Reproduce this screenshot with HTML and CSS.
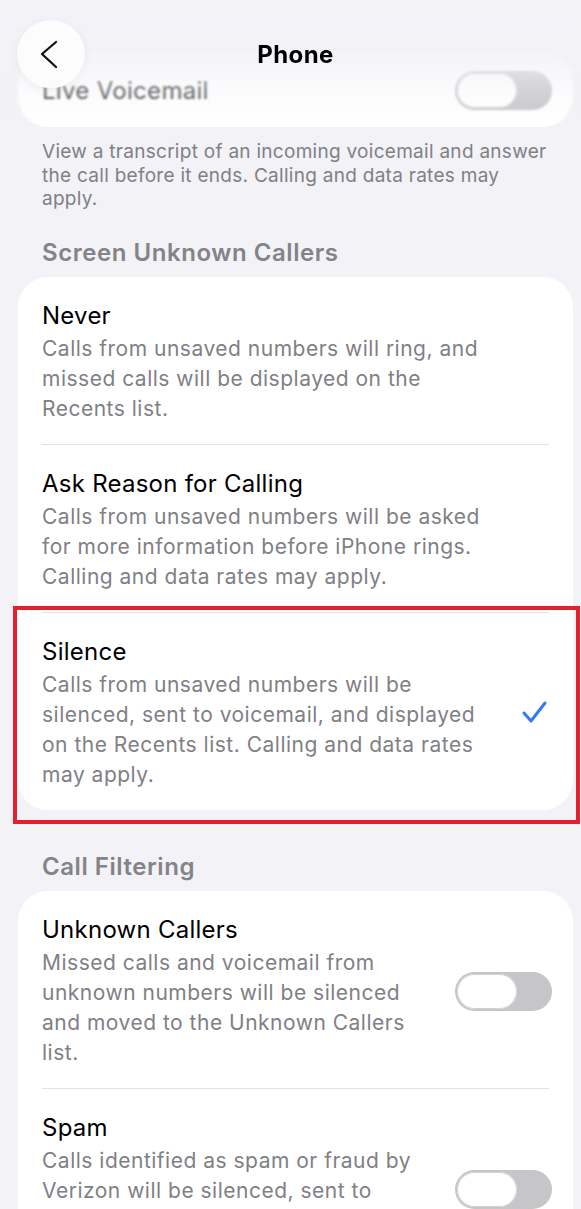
FILE: index.html
```html
<!DOCTYPE html>
<html>
<head>
    <title>Phone</title>
    <link rel="stylesheet" href="styles.css">
</head>
<body>
    <div class="screen">
        <header class="nav">
            <button class="back-btn">
                <svg width="24" height="32" viewBox="0 0 24 32">
                    <polyline points="19,4 5,16 19,29" fill="none" stroke="#111" stroke-width="2.3" stroke-linecap="round" stroke-linejoin="round"/>
                </svg>
            </button>
            <h1 class="nav-title">Phone</h1>
        </header>

        <main class="content">
            <section class="card card-live">
                <div class="switch-row">
                    <span class="row-label">Live Voicemail</span>
                    <span class="switch"><span class="knob"></span></span>
                </div>
            </section>
            <p class="footnote">View a transcript of an incoming voicemail and answer<br>the call before it ends. Calling and data rates may<br>apply.</p>

            <h2 class="section-title">Screen Unknown Callers</h2>
            <section class="card">
                <div class="option">
                    <div class="option-text">
                        <div class="option-title">Never</div>
                        <div class="option-desc">Calls from unsaved numbers will ring, and<br>missed calls will be displayed on the<br>Recents list.</div>
                    </div>
                </div>
                <div class="sep"></div>
                <div class="option">
                    <div class="option-text">
                        <div class="option-title">Ask Reason for Calling</div>
                        <div class="option-desc">Calls from unsaved numbers will be asked<br>for more information before iPhone rings.<br>Calling and data rates may apply.</div>
                    </div>
                </div>
                <div class="sep"></div>
                <div class="option option-selected">
                    <div class="option-text">
                        <div class="option-title">Silence</div>
                        <div class="option-desc">Calls from unsaved numbers will be<br>silenced, sent to voicemail, and displayed<br>on the Recents list. Calling and data rates<br>may apply.</div>
                    </div>
                    <svg class="check" width="28" height="26" viewBox="0 0 28 26">
                        <polyline points="4,13 11,21 25,3" fill="none" stroke="#3478f6" stroke-width="3" stroke-linecap="round" stroke-linejoin="round"/>
                    </svg>
                </div>
            </section>

            <h2 class="section-title section-gap">Call Filtering</h2>
            <section class="card">
                <div class="option">
                    <div class="option-text">
                        <div class="option-title">Unknown Callers</div>
                        <div class="option-desc">Missed calls and voicemail from<br>unknown numbers will be silenced<br>and moved to the Unknown Callers<br>list.</div>
                    </div>
                    <span class="switch"><span class="knob"></span></span>
                </div>
                <div class="sep"></div>
                <div class="option">
                    <div class="option-text">
                        <div class="option-title">Spam</div>
                        <div class="option-desc">Calls identified as spam or fraud by<br>Verizon will be silenced, sent to<br>voicemail, and moved to the Spam<br>list.</div>
                    </div>
                    <span class="switch"><span class="knob"></span></span>
                </div>
            </section>
        </main>
    </div>
</body>
</html>
```

FILE: styles.css
```css
body {
    margin: 0;
    font-family: Inter, "Noto Sans", sans-serif;
    background-color: #f2f2f7;
    color: #000;
}
.screen {
    position: relative;
    height: 1209px;
    overflow: hidden;
}
.nav {
    position: absolute;
    top: 0;
    left: 0;
    right: 0;
    height: 122px;
    z-index: 10;
    background: linear-gradient(to bottom, rgba(242, 242, 247, 0.98) 0%, rgba(242, 242, 247, 0.78) 45%, rgba(242, 242, 247, 0.3) 75%, rgba(242, 242, 247, 0) 100%);
    backdrop-filter: blur(1px);
}
.back-btn {
    position: absolute;
    left: 17px;
    top: 20px;
    width: 68px;
    height: 68px;
    border: none;
    border-radius: 50%;
    background-color: #fcfcfd;
    box-shadow: 0 2px 10px rgba(0, 0, 0, 0.06);
    display: flex;
    align-items: center;
    justify-content: center;
    padding: 0 4px 0 0;
}
.nav-title {
    margin: 0;
    text-align: center;
    padding-left: 10px;
    font-size: 24px;
    font-weight: 700;
    letter-spacing: 0.4px;
    line-height: 30px;
    padding-top: 40px;
}
.content {
    padding: 53px 8px 0 18px;
}
.card {
    background-color: #fff;
    border-radius: 30px;
}
.card-live {
    height: 74px;
    display: flex;
    align-items: center;
}
.switch-row {
    flex: 1;
    display: flex;
    align-items: center;
    justify-content: space-between;
    padding: 0 21px 0 24px;
}
.row-label {
    font-size: 24px;
    letter-spacing: 0.3px;
    color: #333;
}
.switch {
    width: 97px;
    height: 39px;
    border-radius: 20px;
    background-color: #c6c6c8;
    padding: 2px;
    box-sizing: border-box;
    flex-shrink: 0;
}
.knob {
    display: block;
    width: 60px;
    height: 35px;
    border-radius: 18px;
    background-color: #fff;
    box-shadow: inset 0 0 0 1px #d2d2d4;
}
.footnote {
    margin: 13px 0 0 24px;
    font-size: 19px;
    letter-spacing: 0.28px;
    line-height: 23.5px;
    color: #808085;
}
.section-title {
    margin: 28px 0 10px 24px;
    font-size: 24px;
    font-weight: 600;
    letter-spacing: 0.55px;
    line-height: 28px;
    color: #838388;
}
.section-gap {
    margin-top: 43px;
}
.option {
    position: relative;
    display: flex;
    align-items: center;
    justify-content: space-between;
    padding: 24px 21px 20px 24px;
}
.option-title {
    font-size: 24px;
    letter-spacing: 0.25px;
    line-height: 30px;
}
.option-desc {
    margin-top: 3px;
    font-size: 21px;
    letter-spacing: 0.5px;
    line-height: 30px;
    color: #808085;
    white-space: nowrap;
}
.sep {
    height: 1px;
    margin: 0 24px;
    background-color: #e2e2e6;
}
.check {
    margin-right: 4px;
}
.option-selected::after {
    content: "";
    position: absolute;
    top: -7px;
    bottom: -14px;
    left: -5px;
    right: -7px;
    border: 4px solid #e3202b;
}
```
